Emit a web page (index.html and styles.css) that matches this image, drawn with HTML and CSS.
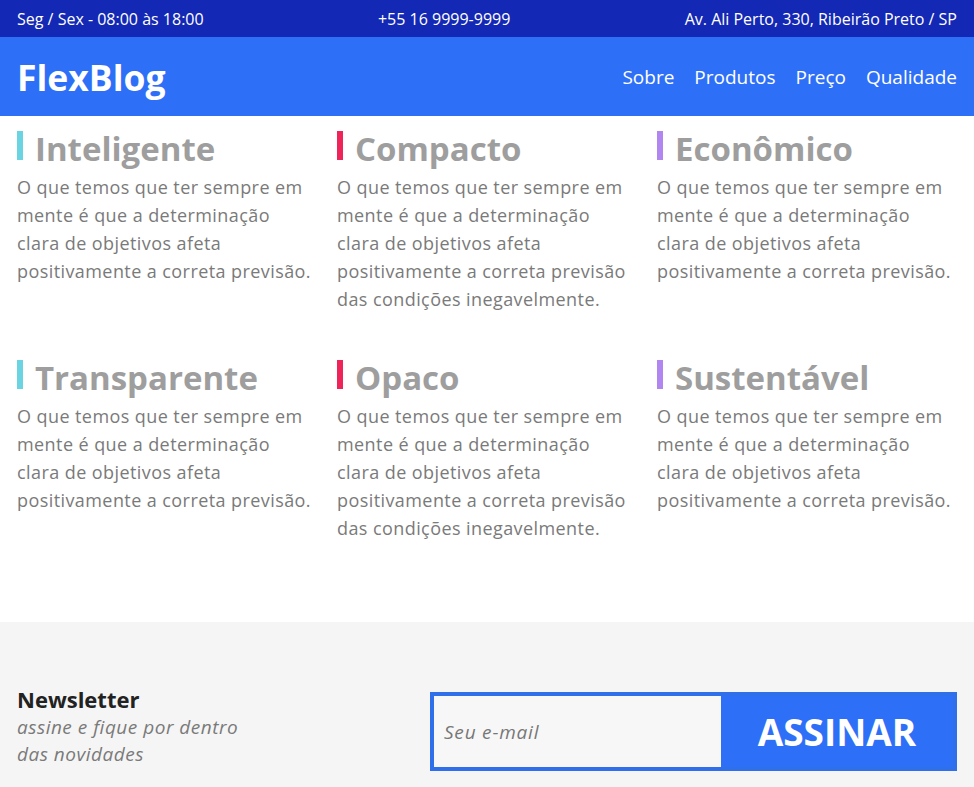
FILE: index.html
```html
<!DOCTYPE html>
<html lang="pt-BR">
<head>
<meta charset="utf-8">
<title>FlexBlog</title>
<link rel="stylesheet" href="styles.css">
</head>
<body>
<div class="topbar">
  <div class="container topbar-inner">
    <span>Seg / Sex - 08:00 às 18:00</span>
    <span>+55 16 9999-9999</span>
    <span>Av. Ali Perto, 330, Ribeirão Preto / SP</span>
  </div>
</div>
<header class="header">
  <div class="container header-inner">
    <a class="logo" href="#">FlexBlog</a>
    <nav class="nav">
      <a href="#">Sobre</a>
      <a href="#">Produtos</a>
      <a href="#">Preço</a>
      <a href="#">Qualidade</a>
    </nav>
  </div>
</header>
<main class="features">
  <div class="container grid">
    <div class="item">
      <h2 class="item-title cyan">Inteligente</h2>
      <p>O que temos que ter sempre em mente é que a determinação clara de objetivos afeta positivamente a correta previsão.</p>
    </div>
    <div class="item">
      <h2 class="item-title pink">Compacto</h2>
      <p>O que temos que ter sempre em mente é que a determinação clara de objetivos afeta positivamente a correta previsão das condições inegavelmente.</p>
    </div>
    <div class="item">
      <h2 class="item-title purple">Econômico</h2>
      <p>O que temos que ter sempre em mente é que a determinação clara de objetivos afeta positivamente a correta previsão.</p>
    </div>
    <div class="item">
      <h2 class="item-title cyan">Transparente</h2>
      <p>O que temos que ter sempre em mente é que a determinação clara de objetivos afeta positivamente a correta previsão.</p>
    </div>
    <div class="item">
      <h2 class="item-title pink">Opaco</h2>
      <p>O que temos que ter sempre em mente é que a determinação clara de objetivos afeta positivamente a correta previsão das condições inegavelmente.</p>
    </div>
    <div class="item">
      <h2 class="item-title purple">Sustentável</h2>
      <p>O que temos que ter sempre em mente é que a determinação clara de objetivos afeta positivamente a correta previsão.</p>
    </div>
  </div>
</main>
<section class="newsletter">
  <div class="container newsletter-inner">
    <div class="newsletter-text">
      <h3>Newsletter</h3>
      <p>assine e fique por dentro das novidades</p>
    </div>
    <form class="newsletter-form">
      <input type="email" placeholder="Seu e-mail">
      <button type="button">ASSINAR</button>
    </form>
  </div>
</section>
</body>
</html>
```

FILE: styles.css
```css
* { box-sizing: border-box; }

body {
  margin: 0;
  font-family: "Open Sans", "Noto Sans", sans-serif;
  background: #fff;
}

.container {
  width: 940px;
  margin: 0 auto;
}

.topbar {
  background: #1328b4;
  color: #fff;
  font-size: 16px;
}

.topbar-inner {
  height: 37px;
  display: flex;
  align-items: center;
  justify-content: space-between;
}

.header {
  background: #2e6ff8;
}

.header-inner {
  height: 79px;
  display: flex;
  align-items: center;
  justify-content: space-between;
}

.logo {
  color: #fff;
  text-decoration: none;
  font-weight: 700;
  font-size: 35.5px;
  line-height: 44px;
}

.nav {
  display: flex;
  gap: 20px;
}

.nav a {
  color: #fff;
  text-decoration: none;
  font-size: 19px;
}

.features {
  padding: 15px 0 80px;
}

.grid {
  display: grid;
  grid-template-columns: repeat(3, 1fr);
  column-gap: 20px;
  row-gap: 47px;
}

.item-title {
  margin: 0 0 8px;
  display: flex;
  align-items: flex-start;
  gap: 12px;
  font-size: 33px;
  line-height: 35px;
  font-weight: 700;
  color: #9e9e9e;
}

.item-title::before {
  content: "";
  width: 6px;
  height: 29px;
  flex: none;
  background: #6ad4e3;
}

.item-title.pink::before { background: #ef2459; }
.item-title.purple::before { background: #b286f0; }

.item p {
  margin: -1px 0 0;
  max-width: 297px;
  font-size: 18px;
  line-height: 28px;
  letter-spacing: 0.42px;
  color: #7a7a7a;
}

.newsletter {
  background: #f5f5f5;
  padding: 63px 0 16px;
}

.newsletter-inner {
  display: flex;
  justify-content: space-between;
  align-items: flex-start;
}

.newsletter-text {
  width: 240px;
}

.newsletter-text h3 {
  margin: 0;
  font-size: 22px;
  line-height: 29px;
  font-weight: 700;
  color: #222;
}

.newsletter-text p {
  margin: 0;
  font-size: 19px;
  line-height: 27px;
  letter-spacing: 0.5px;
  font-style: italic;
  color: #7a7a7a;
}

.newsletter-form {
  margin-top: 7px;
  width: 527px;
  height: 79px;
  display: flex;
  border: 4px solid #2f6fe9;
  background: #2e6ff8;
}

.newsletter-form input {
  width: 287px;
  border: none;
  outline: none;
  background: #f7f7f7;
  padding: 0 10px;
  font-family: inherit;
  font-size: 19px;
  letter-spacing: 0.8px;
  font-style: italic;
  color: #777;
}

.newsletter-form input::placeholder {
  color: #777;
}

.newsletter-form button {
  flex: 1;
  border: none;
  background: #2e6ff8;
  color: #fff;
  font-family: inherit;
  font-size: 37px;
  font-weight: 700;
  cursor: pointer;
}
```
